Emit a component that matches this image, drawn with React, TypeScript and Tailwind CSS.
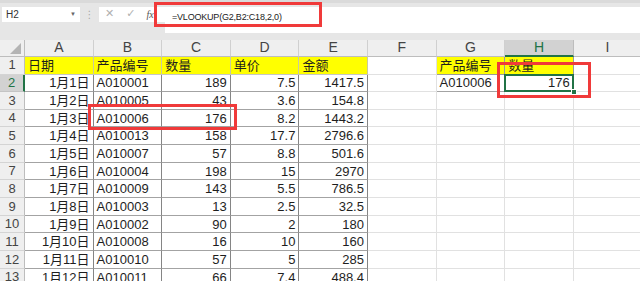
import React from "react";

const COLS = ["A", "B", "C", "D", "E", "F", "G", "H", "I"];

type Row = [string, string, string, string, string];
const DATA: Row[] = [
  ["1月1日", "A010001", "189", "7.5", "1417.5"],
  ["1月2日", "A010005", "43", "3.6", "154.8"],
  ["1月3日", "A010006", "176", "8.2", "1443.2"],
  ["1月4日", "A010013", "158", "17.7", "2796.6"],
  ["1月5日", "A010007", "57", "8.8", "501.6"],
  ["1月6日", "A010004", "198", "15", "2970"],
  ["1月7日", "A010009", "143", "5.5", "786.5"],
  ["1月8日", "A010003", "13", "2.5", "32.5"],
  ["1月9日", "A010002", "90", "2", "180"],
  ["1月10日", "A010008", "16", "10", "160"],
  ["1月11日", "A010010", "57", "5", "285"],
  ["1月12日", "A010011", "66", "7.4", "488.4"],
];

const HEAD = ["日期", "产品编号", "数量", "单价", "金额"];

const cellBase =
  "flex items-center overflow-hidden whitespace-nowrap text-[13px] leading-none text-[#1e1e1e] font-['Liberation_Sans','Noto_Sans_CJK_SC',sans-serif]";

function Cell({
  text,
  right,
  kind,
}: {
  text?: string;
  right?: boolean;
  kind: "grid" | "yellow" | "table" | "tableY";
}) {
  const kindCls =
    kind === "grid"
      ? "bg-white border-r border-b border-[#e1e1e1]"
      : kind === "yellow"
      ? "bg-[#ffff00] border-r border-b border-r-[#c9c9a0] border-b-[#c6c6c6]"
      : kind === "tableY"
      ? "bg-[#ffff00] border-r border-b border-r-[#9a9a9a] border-b-[#9a9a9a]"
      : "bg-white border-r border-b border-r-[#858585] border-b-[#a3a3a3]";
  return (
    <div
      className={`${cellBase} ${kindCls} ${
        right ? "justify-end pr-[3px]" : "justify-start pl-[3px]"
      }`}
    >
      {text}
    </div>
  );
}

function RowHeader({ n, active }: { n: number; active?: boolean }) {
  return (
    <div
      className={
        active
          ? "flex items-center justify-center bg-[#d2d2d2] border-b border-[#c4c4c4] border-r-2 border-r-[#217346] text-[13px] text-[#217346] font-['Liberation_Sans',sans-serif]"
          : "flex items-center justify-center bg-[#efefef] border-b border-[#d4d4d4] border-r border-r-[#bdbdbd] text-[13px] text-[#444444] font-['Liberation_Sans',sans-serif]"
      }
    >
      {n}
    </div>
  );
}

export default function App() {
  return (
    <div className="relative w-[640px] h-[281px] overflow-hidden bg-white">
      {/* formula bar */}
      <div className="flex items-start h-[40px] bg-[#e6e6e6] pt-[7px] border-t-[3px] border-t-[#dadada]">
        <div className="ml-[2px] w-[78px] h-[15px] bg-white flex items-center justify-between px-[4px] -mt-[3px]">
          <span className="text-[10px] text-[#333] font-['Liberation_Sans',sans-serif]">H2</span>
          <span className="text-[6px] text-[#666]">▼</span>
        </div>
        <div className="w-[19px] h-[15px] -mt-[3px] flex items-center justify-center text-[10px] text-[#a8a8a8] font-['DejaVu_Sans',sans-serif]">
          ⋮
        </div>
        <div className="w-[66px] h-[15px] -mt-[3px] bg-white flex items-center">
          <span className="ml-[6px] text-[11px] text-[#b0b0b0] font-['DejaVu_Sans',sans-serif]">✕</span>
          <span className="ml-[12px] text-[11px] text-[#b0b0b0] font-['DejaVu_Sans',sans-serif]">✓</span>
          <span className="ml-[11px] text-[10px] italic text-[#555] font-['Liberation_Serif',serif]">fx</span>
        </div>
        <div className="flex-1 h-[26px] -mt-[3px] bg-white flex items-start pl-[7px] pt-[4px]">
          <span className="text-[9px] tracking-[-0.2px] text-[#222] font-['Liberation_Sans',sans-serif]">
            =VLOOKUP(G2,B2:C18,2,0)
          </span>
        </div>
      </div>

      {/* sheet grid */}
      <div className="grid grid-cols-[25px_repeat(9,68.6px)] grid-rows-[16.5px_18px_repeat(12,17.67px)]">
        {/* corner */}
        <div className="relative bg-[#efefef] border-r border-b border-[#bdbdbd]">
          <div className="absolute right-[3px] bottom-[2px] w-0 h-0 border-l-[11px] border-l-transparent border-b-[11px] border-b-[#b4b4b4]" />
        </div>
        {COLS.map((c) =>
          c === "H" ? (
            <div
              key={c}
              className="flex items-center justify-center bg-[#d2d2d2] border-r border-r-[#bdbdbd] border-b-2 border-b-[#217346] text-[14px] text-[#217346] font-['Liberation_Sans',sans-serif]"
            >
              {c}
            </div>
          ) : (
            <div
              key={c}
              className="flex items-center justify-center bg-[#efefef] border-r border-r-[#d0d0d0] border-b border-b-[#bdbdbd] text-[14px] text-[#444444] font-['Liberation_Sans',sans-serif]"
            >
              {c}
            </div>
          )
        )}

        {/* row 1 */}
        <RowHeader n={1} />
        {HEAD.map((h) => (
          <Cell key={h} text={h} kind="yellow" />
        ))}
        <Cell kind="grid" />
        <Cell text="产品编号" kind="tableY" />
        <Cell text="数量" kind="tableY" />
        <Cell kind="grid" />

        {/* data rows */}
        {DATA.map((r, i) => (
          <React.Fragment key={i}>
            <RowHeader n={i + 2} active={i === 0} />
            <Cell text={r[0]} right kind="table" />
            <Cell text={r[1]} kind="table" />
            <Cell text={r[2]} right kind="table" />
            <Cell text={r[3]} right kind="table" />
            <Cell text={r[4]} right kind="table" />
            <Cell kind="grid" />
            {i === 0 ? (
              <>
                <Cell text="A010006" kind="table" />
                <div className="relative">
                  <div className="absolute -left-[1px] -top-[1px] -right-[0px] bottom-0 border-2 border-[#217346] bg-white flex items-center justify-end pr-[2px] text-[13px] leading-none text-[#1e1e1e] font-['Liberation_Sans',sans-serif]">
                    176
                  </div>
                  <div className="absolute -right-[3px] -bottom-[3px] w-[6px] h-[6px] bg-[#217346] border border-white" />
                </div>
              </>
            ) : (
              <>
                <Cell kind="grid" />
                <Cell kind="grid" />
              </>
            )}
            <Cell kind="grid" />
          </React.Fragment>
        ))}
      </div>

      {/* red annotation boxes */}
      <div className="absolute left-[154px] top-[2px] w-[168px] h-[25px] border-[3px] border-[#f03a3a]" />
      <div className="absolute left-[88px] top-[104px] w-[149px] h-[26px] border-[3px] border-[#f03a3a]" />
      <div className="absolute left-[497px] top-[62px] w-[94px] h-[36px] border-[3px] border-[#f03a3a]" />
    </div>
  );
}
